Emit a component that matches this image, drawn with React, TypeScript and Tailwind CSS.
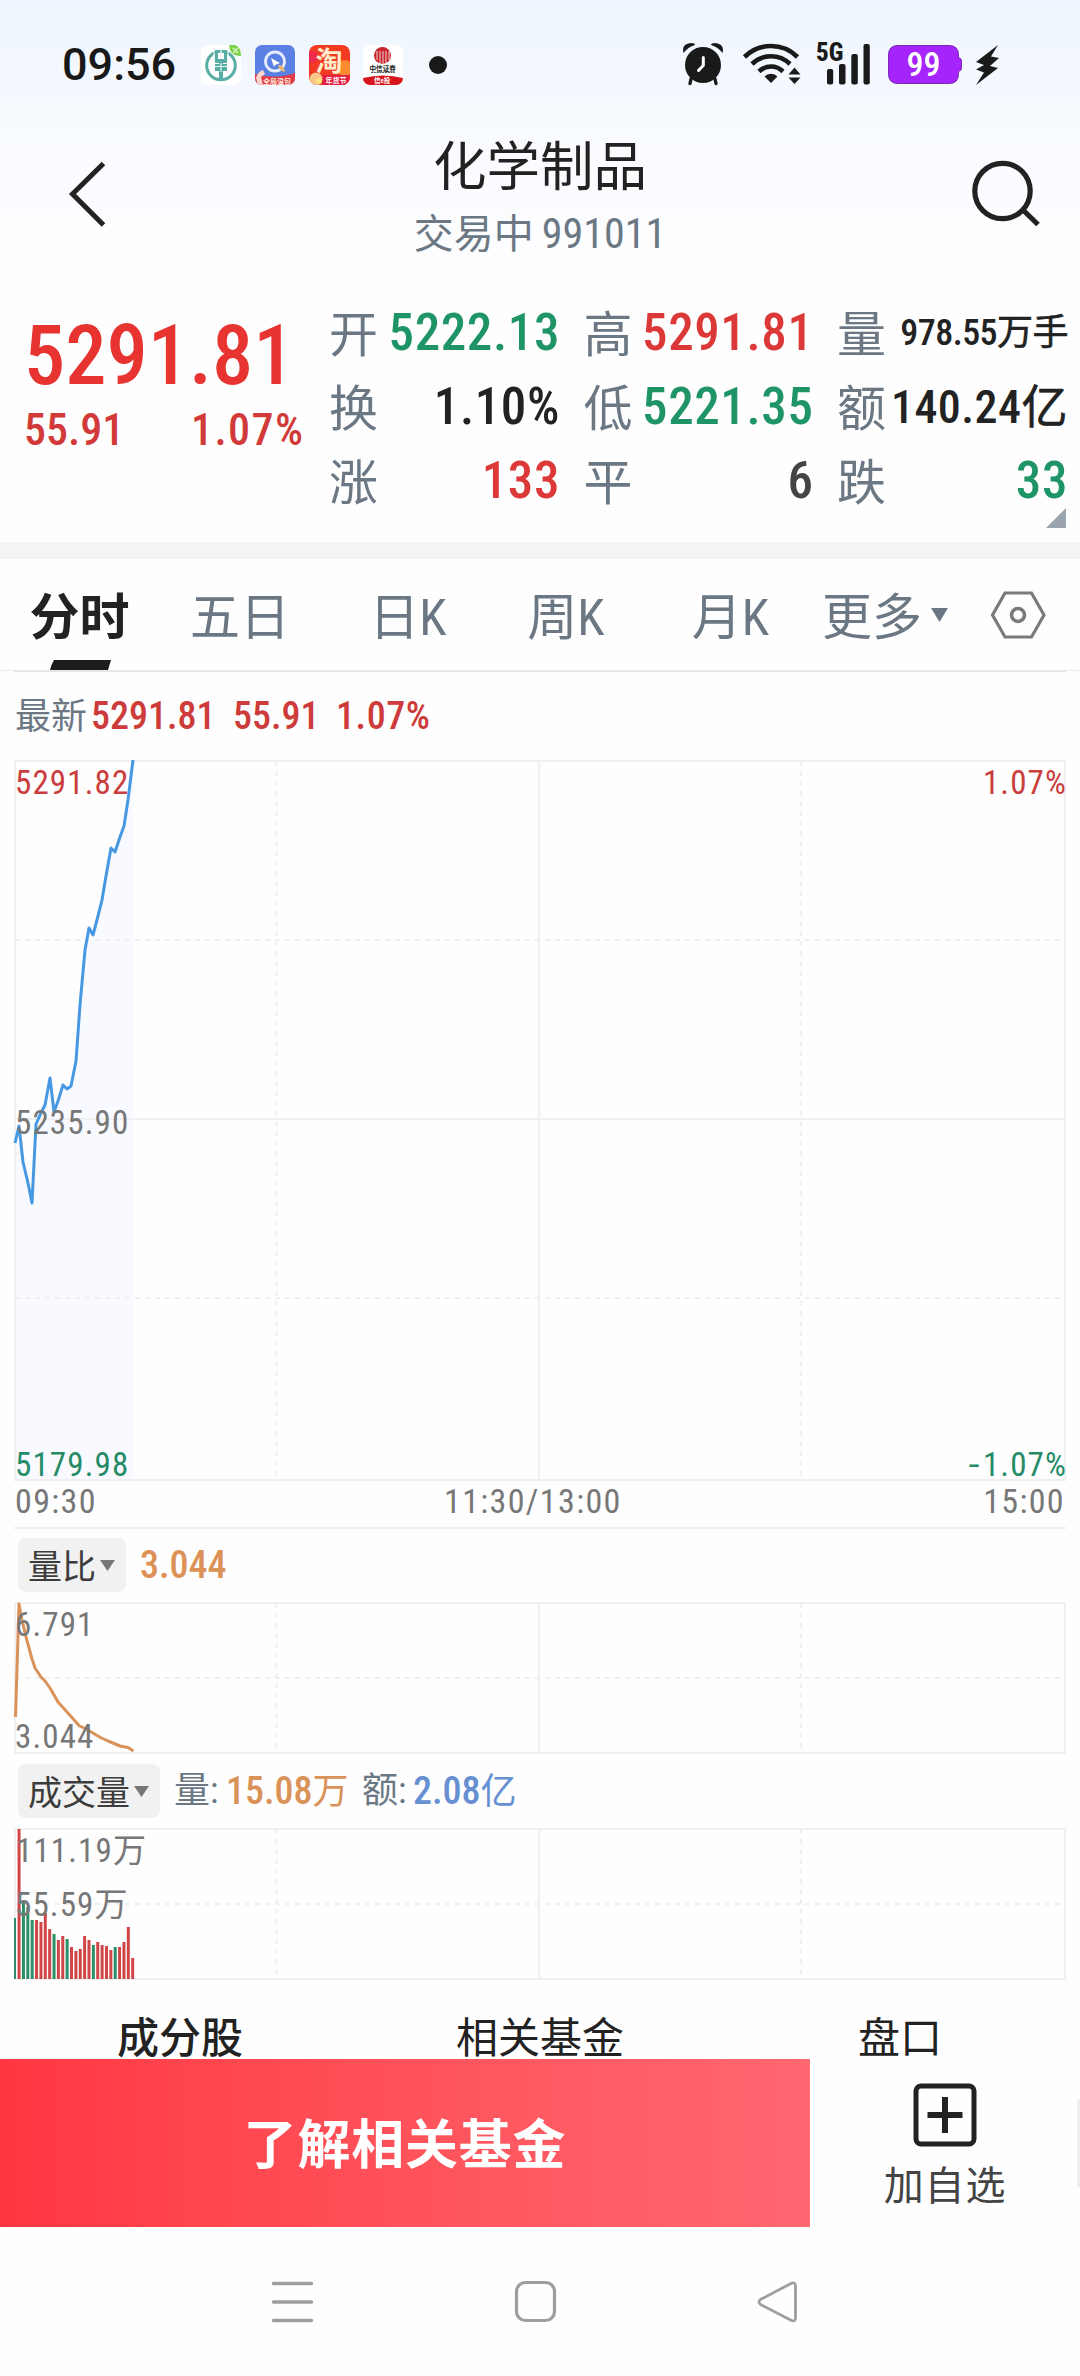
import clsx from "clsx";
import { ReactNode } from "react";

type Tone = "up" | "down" | "ink" | "flat";

const toneClass: Record<Tone, string> = {
  up: "text-[#dc3837]",
  down: "text-[#1f9467]",
  ink: "text-[#222222]",
  flat: "text-[#444444]",
};

const quotes: { label: string; value: string; unit?: string; tone: Tone; size?: string }[] = [
  { label: "开", value: "5222.13", tone: "down" },
  { label: "高", value: "5291.81", tone: "up" },
  { label: "量", value: "978.55", unit: "万手", tone: "ink", size: "text-[36px] tracking-[-0.015em]" },
  { label: "换", value: "1.10%", tone: "ink" },
  { label: "低", value: "5221.35", tone: "down" },
  { label: "额", value: "140.24", unit: "亿", tone: "ink", size: "text-[46px] tracking-[0.01em]" },
  { label: "涨", value: "133", tone: "up" },
  { label: "平", value: "6", tone: "flat" },
  { label: "跌", value: "33", tone: "down" },
];

const tabs = [
  { label: "分时", width: "w-[159px]", active: true },
  { label: "五日", width: "w-[162px]" },
  { label: "日K", width: "w-[174px]" },
  { label: "周K", width: "w-[142px]" },
  { label: "月K", width: "w-[187px]" },
];

// [x, y] pairs in chart pixels
const pricePoints = [
  [15, 383], [19, 366], [23, 402], [28, 423], [32, 443], [36, 364], [41, 353], [45, 345],
  [50, 318], [54, 352], [58, 341], [63, 325], [67, 329], [71, 326], [76, 301], [80, 245],
  [85, 190], [89, 168], [93, 175], [98, 156], [102, 140], [106, 116], [111, 88], [115, 92],
  [120, 77], [124, 66], [128, 40], [133, 0],
];

const ratioPoints = [
  [15.5, 115], [19, 2], [22, 18], [26, 35], [32, 57], [35, 66], [41, 75], [45, 79], [50, 86],
  [58, 100], [63, 105.5], [79.5, 124], [84, 126], [92, 130.5], [100.5, 135.5], [108, 139],
  [120, 144], [128, 145.5], [133.5, 149],
];

// bar heights, positive closes up and negative closes down
const volumes = [
  -61, 150, -78, -72, -59, 59, 57, 66, 50, -45, 39, 43, -40, 32, 28, 30, 43, 39, -34, 37, 34, 33,
  29, -32, 32, 37, 52, 21,
];

const toPath = (points: number[][]) => points.map((p) => p.join(",")).join(" ");

function Grid({ height, rows }: { height: number; rows: { y: number; dashed: boolean }[] }) {
  return (
    <g stroke="#f0f0f0" strokeWidth="2">
      <path d={`M15 1H1065.5M15 ${height - 1}H1065.5M15 0V${height}M1065 0V${height}M539 0V${height}`} />
      <path d={`M276.5 1V${height}M801 1V${height}`} strokeDasharray="5 5" />
      {rows.map((row) => (
        <path key={row.y} d={`M15 ${row.y}H1065`} strokeDasharray={row.dashed ? "5 5" : undefined} />
      ))}
    </g>
  );
}

function AxisLabel({ className, children }: { className: string; children: ReactNode }) {
  return (
    <span className={clsx("absolute text-[33px] leading-[34px] tracking-[0.034em]", className)}>
      {children}
    </span>
  );
}

function IndicatorPill({ children }: { children: ReactNode }) {
  return (
    <button
      type="button"
      className="flex h-[54px] items-center rounded-[8px] bg-[#f1f1f1] pr-[11px] pl-[10px] text-[34px] leading-[54px] text-[#3c3c3c]"
    >
      <span className="relative top-[2px]">{children}</span>
      <svg width="15" height="11" viewBox="0 0 15 11" className="ml-[4px]">
        <path d="M0 0H15L7.5 11Z" fill="#777" />
      </svg>
    </button>
  );
}

function AppIcons() {
  return (
    <div className="flex gap-[13.8px]">
      <svg width="40" height="40" viewBox="0 0 40 40">
        <rect width="40" height="40" rx="7" fill="#fff" />
        <circle cx="20" cy="20.5" r="14.3" fill="none" stroke="#58aea2" strokeWidth="3" />
        <path d="M14 5V18H18V33L20 36L22 33V18H26V5H23V14H17V5Z" fill="#58aea2" />
        <path d="M14 19H26V26H14Z" fill="#58aea2" />
        <path d="M20 4V14M20 18V27M14 21.5H26M13 3V16M27 3V16" stroke="#e6f5f2" strokeWidth="1.2" />
        <path d="M28 0H34Q40 2 40 11Q29 12 28 0Z" fill="#7bd14c" />
        <path d="M32 3L37 8M37 3L32 8" stroke="#d5f3c0" strokeWidth="1.6" />
      </svg>
      <svg width="40" height="40" viewBox="0 0 40 40">
        <clipPath id="app-q"><rect width="40" height="40" rx="7" /></clipPath>
        <g clipPath="url(#app-q)">
          <rect width="40" height="40" fill="#5b80e3" />
          <circle cx="20" cy="16.5" r="9.5" fill="none" stroke="#e4ecff" strokeWidth="2.8" />
          <path d="M16 13L25 18L20 20L19 22Z" fill="#fff" />
          <path d="M23 20Q29 19 30 27Q24 26 23 20Z" fill="#e3b676" />
          <path d="M0 29Q20 35 40 28V40H0Z" fill="#e33b45" />
          <path d="M1 33Q3 26 8 25L10 29L6 32L8 40H3Z" fill="#f6d5cc" />
          <text x="8" y="38.5" fontSize="7" fontWeight="700" fill="#ffe7d8">全局温包</text>
        </g>
      </svg>
      <svg width="41" height="40" viewBox="0 0 41 40">
        <clipPath id="app-tao"><rect width="41" height="40" rx="8" /></clipPath>
        <g clipPath="url(#app-tao)">
          <rect width="41" height="40" fill="#f23a22" />
          <circle cx="36" cy="23" r="8" fill="#f98a2e" />
          <circle cx="3" cy="12" r="6" fill="#ef2a4b" />
          <text x="6.5" y="26" fontSize="27" fontWeight="700" fill="#ffeccb">淘</text>
          <path d="M13 30H41V40H13Z" fill="#e51e3f" />
          <circle cx="7" cy="34" r="6.5" fill="#f8c78c" />
          <circle cx="10" cy="36" r="3" fill="#ffe27a" />
          <text x="16.5" y="38" fontSize="7" fontWeight="700" fill="#fff">年货节</text>
        </g>
      </svg>
      <svg width="40" height="40" viewBox="0 0 40 40">
        <clipPath id="app-citic"><rect width="40" height="40" rx="7" /></clipPath>
        <g clipPath="url(#app-citic)">
          <rect width="40" height="40" fill="#fff" />
          <circle cx="19.5" cy="10.5" r="8.5" fill="#c8252c" />
          <path d="M14 6V15M17 6V19M20 6V19M23 6V19M26 6V15" stroke="#fff" strokeWidth="0.8" />
          <text x="6.5" y="25.5" fontSize="6.6" fontWeight="700" fill="#222">中信证券</text>
          <path d="M8 27.5H32" stroke="#555" strokeWidth="1.2" strokeDasharray="2 0.8" />
          <path d="M0 33Q20 28 40 33V40H0Z" fill="#d8151c" />
          <text x="11" y="38" fontSize="6.6" fontWeight="700" fill="#fff">信e投</text>
        </g>
      </svg>
    </div>
  );
}

function StatusBar() {
  return (
    <div className="flex h-[130px] items-center pr-[78px] pl-[62px]">
      <span className="w-[139px] text-[45px] leading-[54px] font-medium text-[#191919] [font-stretch:90%]">
        09:56
      </span>
      <AppIcons />
      <span className="ml-[26px] h-[18px] w-[18px] rounded-full bg-[#1a1a1a]" />
      <svg className="ml-auto" width="320" height="66" viewBox="682 32 320 66" fill="#1a1a1a">
        <circle cx="703" cy="65" r="18" />
        <path d="M683.5 53Q681 44 691 43Q695 43 695 45Q688 47 683.5 53ZM722.5 53Q725 44 715 43Q711 43 711 45Q718 47 722.5 53Z" />
        <path d="M691 79L690 83.5M715 79L716 83.5" stroke="#1a1a1a" strokeWidth="3.4" strokeLinecap="round" />
        <path d="M703.3 57.5V65.5L698.5 70.5" fill="none" stroke="#fff" strokeWidth="3" strokeLinecap="round" strokeLinejoin="round" />
        <g fill="none" stroke="#1a1a1a" strokeWidth="4.6">
          <path d="M744.5 57A37.5 37.5 0 0 1 797.5 57" />
          <path d="M752 64A27 27 0 0 1 790 64" />
          <path d="M759 71.5A17 17 0 0 1 783 71.5" />
        </g>
        <path d="M764.5 76.5A9 9 0 0 1 777.5 76.5L771 83Z" />
        <path d="M788.5 74.500H800.5L794.5 67.5ZM788.5 77.5H800.5L794.5 84Z" />
        <text x="816" y="60.800" fontSize="25" fontWeight="800" className="[font-stretch:78%]">5G</text>
        <rect x="827" y="69" width="6.2" height="15.5" rx="2" />
        <rect x="839" y="64" width="6.5" height="20.5" rx="2" />
        <rect x="851.3" y="54" width="6.5" height="30.5" rx="2" />
        <rect x="863.5" y="44" width="6.3" height="40.5" rx="2" />
        <path
          d="M898 45.5H949Q958.5 45.5 958.5 55V57.5Q961.5 58 961.5 61V68Q961.5 71 958.5 71.5V74Q958.5 83.5 949 83.5H898Q888.5 83.5 888.5 74V55Q888.5 45.5 898 45.5Z"
          fill="#a524fc"
          stroke="#7b29b5"
        />
        <text x="923.5" y="76.2" fontSize="34" fontWeight="500" fill="#fff" textAnchor="middle">99</text>
        <path d="M998 45L976 62L984 65L976 69.5L984 72.5L976 85L998 68L990 66L999 58L991 56.5Z" />
      </svg>
    </div>
  );
}

function NavHeader() {
  return (
    <div className="flex h-[160px] justify-between">
      <svg width="140" height="130" viewBox="0 130 140 130" fill="none" stroke="#222" strokeWidth="5">
        <path d="M103.5 163.5L72.5 194L103.5 225" />
      </svg>
      <div className="flex flex-col items-center pt-[11px]">
        <h1 className="text-[53.5px] leading-[54px] text-[#222222]">化学制品</h1>
        <p className="mt-[19px] flex items-baseline text-[40px] leading-[40px] text-[#6b7884]">
          <span className="mr-[8px]">交易中</span>
          <span className="text-[42px]">991011</span>
        </p>
      </div>
      <svg width="140" height="130" viewBox="940 130 140 130" fill="none" stroke="#222" strokeWidth="5.2">
        <circle cx="1002.500" cy="191" r="27.7" />
        <path d="M1023 210L1038 224.5" />
      </svg>
    </div>
  );
}

function Quote() {
  return (
    <section className="relative flex h-[252px]">
      <div className="w-[329px] pt-[36px] pl-[24px] font-medium">
        <div className="text-[82.5px] leading-[60px] text-[#e73431]">5291.81</div>
        <div className="mt-[27px] flex text-[44px] leading-[34px] text-[#d23a39]">
          <span className="w-[167px]">55.91</span>
          <span className="tracking-[0.032em]">1.07%</span>
        </div>
      </div>
      <div className="grid grid-cols-[231px_230px_231px] grid-rows-[74px_74px_74px] gap-x-[23.5px] pt-[6px]">
        {quotes.map((quote) => (
          <div key={quote.label} className="flex items-center justify-between whitespace-nowrap">
            <span className="relative top-[3px] text-[49px] leading-[50px] text-[#6b7884]">{quote.label}</span>
            <span
              className={clsx(
                "flex items-baseline leading-[50px] font-medium",
                quote.size ?? "text-[51px] tracking-[0.012em]",
                toneClass[quote.tone],
              )}
            >
              {quote.value}
              {quote.unit && <span className="font-normal [-webkit-text-stroke:0.6px_#222]">{quote.unit}</span>}
            </span>
          </div>
        ))}
      </div>
      <svg className="absolute right-[14px] bottom-[14px]" width="20" height="20">
        <path d="M20 0V20H0Z" fill="#9ca4ae" />
      </svg>
    </section>
  );
}

function PeriodTabs() {
  return (
    <div className="flex h-[112px] border-b border-[#ebebeb] text-[50px] leading-[50px] text-[#6b7884]">
      {tabs.map((tab) => (
        <button
          key={tab.label}
          type="button"
          className={clsx("relative flex items-center justify-center pt-[6px]", tab.width, tab.active && "font-bold text-[#222222]")}
        >
          {tab.label}
          {tab.active && (
            <svg className="absolute bottom-0 left-[50px]" width="61" height="10">
              <path d="M4 0H61L58 10H0Q1 5 4 0Z" fill="#1c1c1c" />
            </svg>
          )}
        </button>
      ))}
      <button type="button" className="flex items-center">
        <span className="relative top-[3px] -ml-[2px]">更多</span>
        <svg width="17" height="14" className="relative ml-[9px]">
          <path d="M0 0H17L8.5 14Z" fill="#6b7884" />
        </svg>
      </button>
      <svg className="mt-[32px] ml-[42px]" width="56" height="48" viewBox="0 0 56 48" fill="none" stroke="#7c7a78" strokeWidth="3.2">
        <path d="M15 2H41.5L54 24L41.5 46H15L2.5 24Z" />
        <circle cx="28" cy="24" r="6.5" strokeWidth="3.6" />
      </svg>
    </div>
  );
}

function PriceChart() {
  return (
    <div className="relative h-[721px] text-[#777777]">
      <svg width="1080" height="721" className="block">
        <polygon points={`${toPath(pricePoints)} 133,720 15,720`} fill="#f8faff" />
        <Grid height={721} rows={[{ y: 180, dashed: true }, { y: 359, dashed: false }, { y: 538, dashed: true }]} />
        <polyline points={toPath(pricePoints)} fill="none" stroke="#4798e3" strokeWidth="3" strokeLinejoin="round" />
      </svg>
      <AxisLabel className="top-[6px] left-[15px] text-[#c93d3c]">5291.82</AxisLabel>
      <AxisLabel className="top-[6px] right-[13px] text-[#c93d3c]">1.07%</AxisLabel>
      <AxisLabel className="top-[346px] left-[15px]">5235.90</AxisLabel>
      <AxisLabel className="top-[688px] left-[15px] text-[#258b66]">5179.98</AxisLabel>
      <AxisLabel className="top-[688px] right-[13px] text-[#258b66]">
        <span className="mr-[2px] inline-block origin-right scale-x-140">-</span>1.07%
      </AxisLabel>
    </div>
  );
}

function RatioChart() {
  return (
    <div className="relative h-[152px] text-[#777777]">
      <svg width="1080" height="152" className="block">
        <Grid height={152} rows={[{ y: 76, dashed: true }]} />
        <polyline points={toPath(ratioPoints)} fill="none" stroke="#d99259" strokeWidth="3" strokeLinejoin="round" />
      </svg>
      <AxisLabel className="top-[6px] left-[15px]">6.791</AxisLabel>
      <AxisLabel className="top-[118px] left-[15px]">3.044</AxisLabel>
    </div>
  );
}

function VolumeChart() {
  return (
    <div className="relative h-[152px] text-[#777777]">
      <svg width="1080" height="152" className="block">
        <Grid height={152} rows={[{ y: 76, dashed: true }]} />
        {volumes.map((volume, i) => (
          <rect
            key={i}
            x={i === 0 ? 14 : 13.2 + i * 4.37}
            y={151 - Math.abs(volume)}
            width={i === 0 ? 2 : 3}
            height={Math.abs(volume)}
            fill={volume > 0 ? "#d04646" : "#2b8f68"}
          />
        ))}
      </svg>
      <AxisLabel className="top-[6px] left-[16px]">111.19万</AxisLabel>
      <AxisLabel className="top-[60px] left-[15px]">55.59万</AxisLabel>
    </div>
  );
}

function Footer() {
  return (
    <div className="flex h-[168px]">
      <button
        type="button"
        className="w-[810px] bg-linear-to-r from-[#ff3641] to-[#ff6771] pt-[6px] text-[53px] leading-[56px] font-bold tracking-[0.015em] text-white"
      >
        了解相关基金
      </button>
      <button type="button" className="flex w-[270px] flex-col items-center pt-[24px]">
        <svg width="64" height="64" viewBox="0 0 64 64" fill="none" stroke="#222">
          <rect x="3" y="3" width="58" height="58" rx="5" strokeWidth="5" />
          <path d="M14.5 32H49.5M32 14V50" strokeWidth="6" />
        </svg>
        <span className="mt-[20px] text-[40px] leading-[40px] tracking-[0.02em] text-[#444444]">加自选</span>
      </button>
    </div>
  );
}

function SystemNav() {
  return (
    <div className="flex h-[149px] items-center pl-[271px] text-[#9e9e9e]">
      <svg width="43" height="44" viewBox="0 0 43 44" stroke="currentColor" strokeWidth="3.4" strokeLinecap="round">
        <path d="M2.5 3.5H40.5M2.5 22H40.5M2.5 40.5H40.5" />
      </svg>
      <svg className="ml-[200px]" width="43" height="43" viewBox="0 0 43 43" fill="none" stroke="currentColor" strokeWidth="3.2">
        <rect x="2.5" y="2.5" width="38" height="38" rx="9" />
      </svg>
      <svg className="ml-[200px]" width="42" height="42" viewBox="0 0 42 42" fill="none" stroke="currentColor" strokeWidth="2.8" strokeLinejoin="round">
        <path d="M3.5 18.5L34.5 2.2Q38.5 1 38.5 5V37Q38.5 41 34.5 39.5L3.5 23.5Q0.5 21 3.5 18.5Z" />
      </svg>
    </div>
  );
}

export default function App() {
  return (
    <div className="relative flex h-[2376px] w-[1080px] flex-col overflow-hidden bg-[#fefefe] font-['Roboto','Noto_Sans_CJK_SC',sans-serif] [font-stretch:85%]">
      <header className="bg-linear-to-b from-[#eef5fe] via-[#f9fbff] via-50% to-[#fefefe]">
        <StatusBar />
        <NavHeader />
      </header>
      <Quote />
      <div className="h-[17px] bg-[#f4f4f4]" />
      <PeriodTabs />
      <div className="mx-[14px] h-px bg-[#e4e4e4]" />
      <div className="flex h-[88px] items-center text-[38px] leading-[40px] font-medium text-[#cd3b3a]">
        <span className="relative top-[1px] ml-[15px] w-[76px] text-[36px] font-normal text-[#6b7884]">最新</span>
        <span className="w-[142px]">5291.81</span>
        <span className="w-[103px]">55.91</span>
        <span className="tracking-[0.015em]">1.07%</span>
      </div>
      <PriceChart />
      <div className="mx-[14px] flex h-[48px] border-b-2 border-[#f0f0f0] text-[34px] leading-[40px] tracking-[0.04em] text-[#777777]">
        <span className="w-[430px] pl-[1px]">09:30</span>
        <span>11:30/13:00</span>
        <span className="mr-[1px] ml-auto">15:00</span>
      </div>
      <div className="mb-px flex h-[72px] items-center pl-[18px] leading-[54px]">
        <IndicatorPill>量比</IndicatorPill>
        <span className="ml-[14px] text-[38px] font-medium text-[#dc9156]">3.044</span>
      </div>
      <RatioChart />
      <div className="my-px flex h-[72px] items-center pl-[18px] text-[38px] leading-[54px] text-[#6b7884]">
        <IndicatorPill>成交量</IndicatorPill>
        <span className="ml-[14px] w-[52px] text-[36px]">量:</span>
        <span className="w-[136px] font-medium text-[#d99259]">
          15.08<span className="text-[36px] font-normal">万</span>
        </span>
        <span className="w-[51px] text-[36px]">额:</span>
        <span className="font-medium text-[#6690d2]">
          2.08<span className="text-[36px] font-normal">亿</span>
        </span>
      </div>
      <VolumeChart />
      <div className="flex h-[79px] pt-[38px] text-[42px] leading-[42px] whitespace-nowrap text-[#222222]">
        <span className="w-[360px] text-center font-medium">成分股</span>
        <span className="w-[360px] text-center">相关基金</span>
        <span className="w-[360px] text-center">盘口</span>
      </div>
      <Footer />
      <SystemNav />
      <div className="absolute top-[2099px] right-0 h-[88px] w-[3px] bg-[#eef0f0]" />
    </div>
  );
}
